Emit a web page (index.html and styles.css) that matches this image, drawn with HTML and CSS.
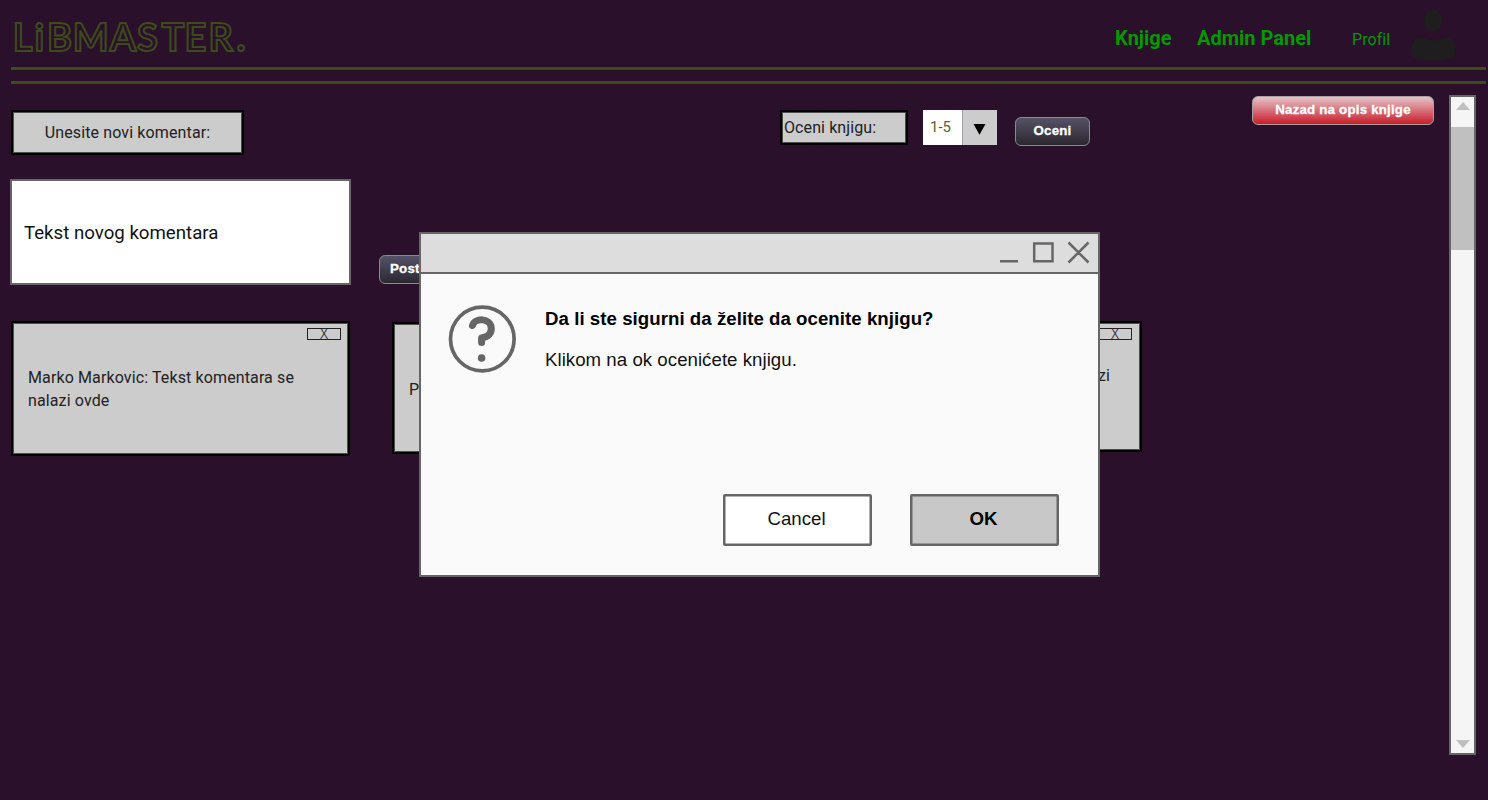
FILE: index.html
```html
<!DOCTYPE html>
<html lang="sr">
<head>
<meta charset="utf-8">
<title>LibMaster</title>
<link rel="stylesheet" href="styles.css">
</head>
<body>
<header class="header">
  <svg class="logo" width="250" height="48" viewBox="0 0 250 48">
    <text class="logo-text" x="-.3 21.500 34 59.800 96.700 124 148.500 171.500 195.500 223.500" y="39.200">LiBMASTER.</text>
  </svg>
  <nav class="nav">
    <a class="nav-link nav-books">Knjige</a>
    <a class="nav-link nav-admin">Admin Panel</a>
    <a class="nav-profile">Profil</a>
    <svg class="avatar" width="46" height="52" viewBox="0 0 46 52">
      <ellipse cx="22" cy="11.500" rx="9" ry="11"/>
      <path d="M8 29C13 28 15 31.500 22.500 31.500S32 28 37 29C42 30 44.500 35 44.500 41C44.500 47 43 48 38 49.500C29 52 16 52 7 49.500C2 48 .5 47 .5 41C.5 35 3 30 8 29Z"/>
    </svg>
  </nav>
</header>
<div class="rule"></div>
<div class="rule rule-second"></div>
<div class="body">
  <main class="main">
    <section class="toolbar">
      <div class="box label-new">Unesite novi komentar:</div>
      <div class="box label-rate">Oceni knjigu:</div>
      <div class="select"><span class="select-value">1-5</span><span class="select-arrow"><svg width="13" height="11" viewBox="0 0 13 11"><path d="M.5 0H12.500L6.500 10.800Z"/></svg></span></div>
      <button class="btn btn-rate">Oceni</button>
      <button class="btn btn-back">Nazad na opis knjige</button>
    </section>
    <section class="compose">
      <div class="editor">Tekst novog komentara</div>
      <button class="btn btn-post">Postavi</button>
    </section>
    <section class="comments">
      <article class="box comment first"><span class="remove"><span class="remove-x">X</span></span>Marko Markovic: Tekst komentara se nalazi ovde</article>
      <article class="box comment second">Pera</article>
      <article class="box comment third"><span class="remove"><span class="remove-x">X</span></span>zi</article>
    </section>
  </main>
  <aside class="scrollbar">
    <span class="scroll-up"></span>
    <span class="scroll-thumb"></span>
    <span class="scroll-down"></span>
  </aside>
</div>
<div class="dialog">
  <div class="dialog-title">
    <svg width="94" height="26" viewBox="0 0 94 26"><path d="M2 22.300H20M36.200 4.500H54.500V22.300H36.200ZM70.500 3.500L90.500 23.500M90.500 3.500L70.500 23.500"/></svg>
  </div>
  <div class="dialog-body">
    <svg class="question" width="68" height="68" viewBox="0 0 68 68">
      <circle cx="34.300" cy="34" r="31.800" fill="none" stroke="#666" stroke-width="3.700"/>
      <path d="M24.500 20.500C26.500 12.500 43 12.500 43.300 23.500C43.300 29.500 39 32 33.600 33V37.500" fill="none" stroke="#666" stroke-width="7" stroke-linecap="round" stroke-linejoin="round"/>
      <circle cx="33.600" cy="53" r="3.800" fill="#666"/>
    </svg>
    <div class="dialog-copy">
      <h1 class="dialog-heading">Da li ste sigurni da želite da ocenite knjigu?</h1>
      <p class="dialog-text">Klikom na ok ocenićete knjigu.</p>
    </div>
  </div>
  <div class="dialog-actions">
    <button class="dialog-btn">Cancel</button>
    <button class="dialog-btn primary">OK</button>
  </div>
</div>
</body>
</html>
```
FILE: styles.css
```css
* { box-sizing: border-box; }
html, body { height: 100%; }
body { margin: 0; background: #2a102b; color: #222; font: 16px/23px Roboto, sans-serif; overflow: hidden; position: relative; }
.header { height: 67px; display: flex; justify-content: space-between; padding: 0 31px 0 13px; }
.logo { margin-top: 12px; }
.logo-text { font: 700 38px Lato, sans-serif; fill: none; stroke: #3c4b1b; stroke-width: 2px; }
.nav { display: flex; align-items: flex-start; color: #090; }
.nav-link { font-size: 20px; font-weight: 700; margin-top: 27px; white-space: nowrap; }
.nav-books { width: 82px; }
.nav-admin { width: 155px; }
.nav-profile { width: 59px; margin-top: 28px; letter-spacing: .05px; }
.avatar { margin-top: 9px; fill: #1e1e1e; }
.rule { height: 3px; margin: 0 2px 0 11px; background: #3c4b1b; }
.rule-second { margin-top: 11px; }
.body { display: flex; justify-content: space-between; padding: 11px 12px 0 10px; }
.main { width: 1425px; }
.box { border: 2px solid #000; background: #ccc; box-shadow: inset 0 0 0 1px #4b504d; }
.toolbar { display: flex; align-items: flex-start; height: 84px; }
.label-new { width: 233px; height: 45px; margin: 15px 0 0 1px; padding-top: 9px; text-align: center; letter-spacing: .13px; }
.label-rate { width: 128px; height: 35px; margin: 15px 0 0 536px; padding: 4px 0 0 2px; letter-spacing: .1px; }
.select { display: flex; width: 74px; height: 35px; margin: 15px 0 0 15px; background: #ccc; }
.select-value { width: 40px; padding: 6px 0 0 7px; background: #fff; color: #566334; font-size: 15px; border-right: 1px solid #a9a0aa; }
.select-arrow { flex: 1; padding: 14px 0 0 10px; line-height: 0; }
.btn { font: 700 13.3px/15px "Liberation Sans", sans-serif; color: #fff; -webkit-text-stroke: .3px #fff; border: 1px solid #8d8790; border-radius: 6px; background: linear-gradient(#565268, #2b2830); padding: 0 0 3px; height: 29px; white-space: nowrap; letter-spacing: .2px; }
.btn-rate { width: 75px; margin: 22px 0 0 18px; }
.btn-back { width: 182px; margin: 1px 0 0 162px; background: linear-gradient(#e5c4c8, #c91c2a); border-color: #a9a0a4; }
.compose { display: flex; align-items: flex-start; height: 142px; }
.editor { width: 341px; height: 106px; border: 2px solid #666; padding: 41px 12px 0; background: #fff; color: #111; font-size: 18.67px; }
.btn-post { width: 75px; margin: 76px 0 0 28px; text-align: left; padding-left: 10px; }
.comments { display: flex; align-items: flex-start; padding-left: 1px; }
.comment { position: relative; letter-spacing: .12px; }
.first { width: 339px; height: 135px; padding: 43px 15px 0; }
.second { width: 339px; height: 132px; margin: 1px 0 0 42px; padding: 54px 15px 0; }
.third { width: 339px; height: 131px; margin-left: 72px; padding: 41px 30px 0; text-align: right; }
.remove { position: absolute; top: 5px; right: 7px; width: 34px; height: 12px; border: 1.5px solid #222; display: flex; align-items: center; justify-content: center; line-height: 12px; font-size: 14px; }
.third .remove { right: 8px; }
.remove-x { font-weight: 300; }
.scrollbar { width: 27px; height: 660px; border: 2px solid #666; background: #f5f5f5; display: flex; flex-direction: column; align-items: center; }
.scroll-up, .scroll-down { border: 7px solid transparent; border-top: 0; border-bottom: 8px solid #c0c0c0; margin-top: 5px; }
.scroll-thumb { width: 100%; height: 123px; margin-top: 17px; background: #c0c0c0; }
.scroll-down { border-bottom: 0; border-top: 8px solid #c0c0c0; margin: auto 0 5px; }
.dialog { position: absolute; left: 419px; top: 232px; width: 681px; height: 345px; border: 2px solid #666; background: #fafafa; color: #000; font: 18.67px/22px "Liberation Sans", sans-serif; }
.dialog-title { height: 40px; background: #ddd; border-bottom: 2px solid #666; display: flex; justify-content: flex-end; padding: 5px 6px 0 0; }
.dialog-title svg { fill: none; stroke: #666; stroke-width: 2.5; }
.dialog-body { display: flex; height: 220px; padding: 31px 0 0 27px; }
.question { margin-right: 29px; }
.dialog-heading { margin: 3px 0 0; font: inherit; font-weight: 700; white-space: nowrap; letter-spacing: .04px; }
.dialog-text { margin: 19px 0 0; letter-spacing: .03px; color: #111; }
.dialog-actions { display: flex; justify-content: flex-end; gap: 38px; padding-right: 39px; }
.dialog-btn { width: 149px; height: 52px; border: 2px solid #666; border-radius: 2px; background: #fff; color: #111; font: inherit; padding: 0 2px 2px 0; box-shadow: inset 0 0 0 .5px #666; }
.primary { background: #c8c8c8; color: #000; font-weight: 700; }
```
